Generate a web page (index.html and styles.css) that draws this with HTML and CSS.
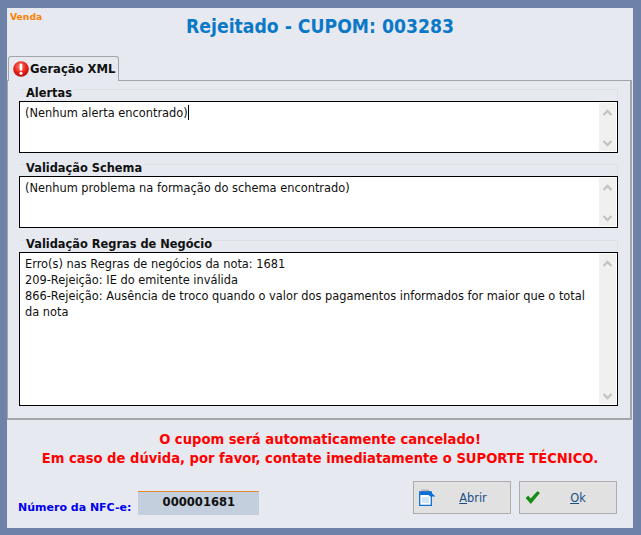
FILE: index.html
```html
<!DOCTYPE html>
<html lang="pt-BR">
<head>
<meta charset="utf-8">
<title>Venda</title>
<link rel="stylesheet" href="styles.css">
</head>
<body>
<div class="window">
  <div class="caption">Venda</div>
  <h1 class="title">Rejeitado - CUPOM: 003283</h1>
  <div class="tabs">
    <div class="tab">
      <svg class="tab-icon" width="16" height="16" viewBox="0 0 16 16">
        <defs><radialGradient id="r" cx="45%" cy="35%" r="70%"><stop offset="0" stop-color="#ff8a7a"/><stop offset=".55" stop-color="#e8241c"/><stop offset="1" stop-color="#a80c0c"/></radialGradient></defs>
        <circle cx="8" cy="8" r="7.8" fill="url(#r)"/>
        <rect x="6.7" y="2.6" width="2.6" height="7.2" rx="1.1" fill="#fff"/>
        <circle cx="8" cy="12.2" r="1.5" fill="#fff"/>
      </svg>
      <span class="tab-label">Geração XML</span>
    </div>
  </div>
  <div class="page">
    <section class="group">
      <div class="legend"><span>Alertas</span></div>
      <div class="memo memo-s">
        <div class="memo-text">(Nenhum alerta encontrado)<span class="caret"></span></div>
        <div class="scroll">
          <svg width="11" height="7" viewBox="0 0 11 7"><path d="M1.500 6 5.500 2 9.500 6" fill="none" stroke="#c4c4c4" stroke-width="2.400"/></svg>
          <svg width="11" height="7" viewBox="0 0 11 7"><path d="M1.500 1 5.500 5 9.500 1" fill="none" stroke="#c4c4c4" stroke-width="2.400"/></svg>
        </div>
      </div>
    </section>
    <section class="group">
      <div class="legend"><span>Validação Schema</span></div>
      <div class="memo memo-s">
        <div class="memo-text">(Nenhum problema na formação do schema encontrado)</div>
        <div class="scroll">
          <svg width="11" height="7" viewBox="0 0 11 7"><path d="M1.500 6 5.500 2 9.500 6" fill="none" stroke="#c4c4c4" stroke-width="2.400"/></svg>
          <svg width="11" height="7" viewBox="0 0 11 7"><path d="M1.500 1 5.500 5 9.500 1" fill="none" stroke="#c4c4c4" stroke-width="2.400"/></svg>
        </div>
      </div>
    </section>
    <section class="group group-last">
      <div class="legend"><span>Validação Regras de Negócio</span></div>
      <div class="memo memo-l">
        <div class="memo-text">Erro(s) nas Regras de negócios da nota: 1681<br>209-Rejeição: IE do emitente inválida<br>866-Rejeição: Ausência de troco quando o valor dos pagamentos informados for maior que o total da nota</div>
        <div class="scroll">
          <svg width="11" height="7" viewBox="0 0 11 7"><path d="M1.500 6 5.500 2 9.500 6" fill="none" stroke="#c4c4c4" stroke-width="2.400"/></svg>
          <svg width="11" height="7" viewBox="0 0 11 7"><path d="M1.500 1 5.500 5 9.500 1" fill="none" stroke="#c4c4c4" stroke-width="2.400"/></svg>
        </div>
      </div>
    </section>
  </div>
  <div class="warning">
    <div>O cupom será automaticamente cancelado!</div>
    <div>Em caso de dúvida, por favor, contate imediatamente o SUPORTE TÉCNICO.</div>
  </div>
  <div class="footer">
    <div class="number">
      <span class="number-label">Número da NFC-e:</span>
      <span class="number-value">000001681</span>
    </div>
    <div class="buttons">
      <button class="btn" type="button">
        <svg class="btn-icon" width="17" height="17" viewBox="0 0 17 17">
          <path d="M.7 3h11.600v13.300H.7z" fill="#fff" stroke="#0f6fd6" stroke-width="1.300"/>
          <path d="M3 9h7M3 11h7M3 13h7" stroke="#9fccf5" stroke-width="1"/>
          <path d="M1 4 3 2h7.500L16.500 7.500H11L9.500 6H1z" fill="#0f6fd6"/>
          <path d="M3 .5v2M5 .5v2M7 .5v2M9 .5v2" stroke="#8d8d8d" stroke-width="1"/>
        </svg>
        <span class="btn-label"><u>A</u>brir</span>
      </button>
      <button class="btn" type="button">
        <svg class="btn-icon" width="15" height="13" viewBox="0 0 15 13">
          <path d="M1 7 3.200 5 5.600 8 12.500 .5 14.500 2 5.800 12.500z" fill="#12930f" stroke="#0a6a08" stroke-width=".6"/>
        </svg>
        <span class="btn-label"><u>O</u>k</span>
      </button>
    </div>
  </div>
</div>
</body>
</html>
```
FILE: styles.css
```css
* { box-sizing: border-box; }
html, body { margin: 0; height: 100%; }
body {
  background: #6e82a8;
  padding: 8px 8px 7px 7px;
  font-family: "DejaVu Sans", sans-serif;
  font-size: 11.4px;
  overflow: hidden;
}
.window {
  width: 626px;
  height: 520px;
  background: #e6e9ef;
  display: flex;
  flex-direction: column;
}
.caption {
  height: 13px;
  padding-left: 3px;
  margin-top: 2px;
  font-size: 9.2px;
  font-weight: bold;
  line-height: 13px;
  color: #ff8000;
}
.title {
  margin: -8px 0 0;
  height: 41px;
  font-family: "DejaVu Sans Condensed", "DejaVu Sans", sans-serif;
  font-size: 19.2px;
  font-weight: bold;
  line-height: 24px;
  text-align: center;
  color: #0b78c8;
}
.tabs {
  display: flex;
  height: 24px;
  margin-left: 1px;
  position: relative;
  z-index: 1;
}
.tab {
  width: 111px;
  height: 25px;
  display: flex;
  align-items: center;
  gap: 1px;
  padding: 0 0 0 4px;
  background: #e6e9ef;
  border: 1px solid #a3a6a9;
  border-bottom: 0;
  border-radius: 3px 3px 0 0;
  font-size: 11.6px;
  font-weight: bold;
  color: #101010;
}
.tab-label { white-space: nowrap; }
.page {
  height: 340px;
  margin: 0 1px 0 0;
  padding: 2px 12px 0 11px;
  border: 2px solid #a3a6a9;
  border-width: 1px 2px 2px 1px;
  display: flex;
  flex-direction: column;
  gap: 5px;
}
.group { display: flex; flex-direction: column; }
.group-last { margin-top: 1px; }
.legend {
  margin-top: 6px;
  height: 12px;
  position: relative;
  font-weight: bold;
  line-height: 16px;
  color: #101010;
  border: 1px solid #dcdfe4;
  border-width: 1px 1px 0 0;
}
.legend span {
  position: absolute;
  top: -5px;
  left: 7px;
  background: #e6e9ef;
  padding-right: 2px;
}
.memo {
  background: #fff;
  border: 1px solid #000;
  display: flex;
  justify-content: space-between;
}
.memo-s { height: 52px; }
.memo-l { height: 154px; }
.memo-text {
  flex: 1;
  padding: 3px 4px 0 5px;
  line-height: 16px;
  color: #101010;
}
.caret {
  display: inline-block;
  width: 1px;
  height: 15px;
  background: #000;
  vertical-align: -3px;
}
.scroll {
  width: 17px;
  flex: none;
  margin: 1px 1px 1px 0;
  padding: 6px 0 4px;
  background: #f0f0f0;
  display: flex;
  flex-direction: column;
  justify-content: space-between;
  align-items: center;
}
.warning {
  margin-top: 9px;
  text-align: center;
  font-family: "DejaVu Sans Condensed", "DejaVu Sans", sans-serif;
  font-size: 14.6px;
  font-weight: bold;
  line-height: 19px;
  color: #ff0000;
}
.footer {
  display: flex;
  justify-content: space-between;
  padding: 14px 16px 0 11px;
}
.number { display: flex; align-items: flex-end; gap: 7px; padding-top: 10px; }
.number-label {
  font-size: 11px;
  font-weight: bold;
  color: #0000f0;
  line-height: 16px;
  margin-bottom: -1px;
}
.number-value {
  width: 121px;
  height: 24px;
  border-top: 1px solid #e58a2e;
  background: #c3cfdc;
  font-size: 11.6px;
  font-weight: bold;
  line-height: 21px;
  text-align: center;
  color: #101010;
}
.buttons { display: flex; gap: 8px; }
.btn {
  width: 98px;
  height: 33px;
  padding: 0 0 0 5px;
  display: flex;
  align-items: center;
  background: #e1e1e1;
  border: 1px solid #adadad;
  font-family: inherit;
  font-size: 11.4px;
  color: #1a4f86;
}
.btn-icon { flex: none; }
.btn-label { flex: 1; text-align: center; }
```
